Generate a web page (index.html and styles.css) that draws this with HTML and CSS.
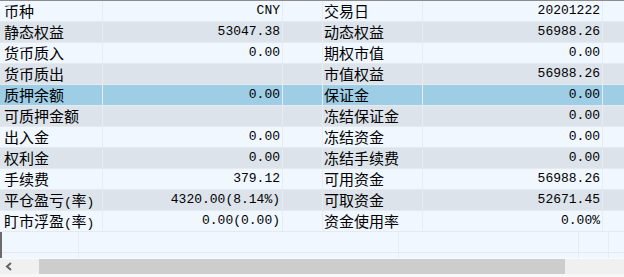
FILE: index.html
```html
<!DOCTYPE html>
<html lang="zh">
<head>
<meta charset="utf-8">
<link rel="stylesheet" href="styles.css">
</head>
<body>
<div class="panel">
  <div class="grid">
    <div class="rows">
      <div class="row light"><div class="c lbl">币种</div><div class="c val">CNY</div><div class="c gap"></div><div class="c lbl2">交易日</div><div class="c val">20201222</div><div class="c end"></div></div>
      <div class="row dark"><div class="c lbl">静态权益</div><div class="c val">53047.38</div><div class="c gap"></div><div class="c lbl2">动态权益</div><div class="c val">56988.26</div><div class="c end"></div></div>
      <div class="row light"><div class="c lbl">货币质入</div><div class="c val">0.00</div><div class="c gap"></div><div class="c lbl2">期权市值</div><div class="c val">0.00</div><div class="c end"></div></div>
      <div class="row dark"><div class="c lbl">货币质出</div><div class="c val"></div><div class="c gap"></div><div class="c lbl2">市值权益</div><div class="c val">56988.26</div><div class="c end"></div></div>
      <div class="row sel"><div class="c lbl">质押余额</div><div class="c val">0.00</div><div class="c gap"></div><div class="c lbl2">保证金</div><div class="c val">0.00</div><div class="c end"></div></div>
      <div class="row dark"><div class="c lbl">可质押金额</div><div class="c val"></div><div class="c gap"></div><div class="c lbl2">冻结保证金</div><div class="c val">0.00</div><div class="c end"></div></div>
      <div class="row light"><div class="c lbl">出入金</div><div class="c val">0.00</div><div class="c gap"></div><div class="c lbl2">冻结资金</div><div class="c val">0.00</div><div class="c end"></div></div>
      <div class="row dark"><div class="c lbl">权利金</div><div class="c val">0.00</div><div class="c gap"></div><div class="c lbl2">冻结手续费</div><div class="c val">0.00</div><div class="c end"></div></div>
      <div class="row light"><div class="c lbl">手续费</div><div class="c val">379.12</div><div class="c gap"></div><div class="c lbl2">可用资金</div><div class="c val">56988.26</div><div class="c end"></div></div>
      <div class="row dark"><div class="c lbl">平仓盈亏<span class="hw">(</span>率<span class="hw">)</span></div><div class="c val">4320.00(8.14%)</div><div class="c gap"></div><div class="c lbl2">可取资金</div><div class="c val">52671.45</div><div class="c end"></div></div>
      <div class="row light"><div class="c lbl">盯市浮盈<span class="hw">(</span>率<span class="hw">)</span></div><div class="c val">0.00(0.00)</div><div class="c gap"></div><div class="c lbl2">资金使用率</div><div class="c val">0.00%</div><div class="c end"></div></div>
    </div>
    <div class="filler"></div>
  </div>
  <div class="hscroll">
    <div class="arrow">
      <svg width="8" height="9" viewBox="0 0 8 9"><polyline points="6,1 2,4.5 6,8" fill="none" stroke="#606060" stroke-width="2"/></svg>
    </div>
    <div class="thumb"></div>
    <div class="track"></div>
  </div>
</div>
</body>
</html>
```

FILE: styles.css
```css
html, body {
  margin: 0;
  padding: 0;
  background: #f0f7ff;
}
.panel {
  width: 624px;
  height: 277px;
  display: flex;
  flex-direction: column;
  overflow: hidden;
  font-family: "Noto Sans CJK SC", "Liberation Sans", sans-serif;
  color: #000;
}
.grid {
  height: 258px;
  display: flex;
  flex-direction: column;
  border-top: 1px solid #8c8c8c;
  box-sizing: border-box;
}
.rows {
  flex: none;
}
.row {
  display: grid;
  grid-template-columns: 103px 180px 40px 100px 180px 1fr;
  height: 21px;
  border-bottom: 1px solid #e6eaee;
  box-sizing: border-box;
}
.light { background: #f0f7ff; }
.dark { background: #dce3ea; }
.sel { background: #9ecde6; }
.c {
  border-right: 1px solid #e8ecf0;
  box-sizing: border-box;
  height: 20px;
  line-height: 19px;
  white-space: nowrap;
  overflow: hidden;
}
.end { border-right: none; }
.lbl {
  font-size: 15px;
  padding-left: 4px;
}
.lbl2 {
  font-size: 15px;
  padding-left: 1px;
}
.hw {
  display: inline-block;
  width: 7.5px;
  text-align: center;
  font-family: "Liberation Mono", monospace;
  font-size: 13px;
}
.val {
  font-family: "Liberation Mono", monospace;
  font-size: 13px;
  line-height: 20px;
  text-align: right;
  padding-right: 2px;
}
.filler {
  flex: 1;
  border-left: 2px solid #6b6b6b;
  box-sizing: border-box;
  background:
    linear-gradient(#e6eaee, #e6eaee) 0 20px / 100% 1px no-repeat,
    linear-gradient(#e8ecf0, #e8ecf0) 76px 0 / 1px 100% no-repeat,
    linear-gradient(#e8ecf0, #e8ecf0) 396px 0 / 1px 100% no-repeat,
    linear-gradient(#e8ecf0, #e8ecf0) 576px 0 / 1px 100% no-repeat,
    linear-gradient(#e8ecf0, #e8ecf0) 606px 0 / 1px 100% no-repeat,
    #f0f7ff;
}
.hscroll {
  flex: 1;
  display: flex;
  background: #f0f0f0;
  border-top: 1px solid #fafafa;
  border-bottom: 3px solid #f7f7f7;
  box-sizing: border-box;
}
.arrow {
  width: 39px;
  display: flex;
  align-items: center;
  padding-left: 5px;
  box-sizing: border-box;
}
.thumb {
  width: 526px;
  background: #cdcdcd;
}
.track {
  flex: 1;
}
```
